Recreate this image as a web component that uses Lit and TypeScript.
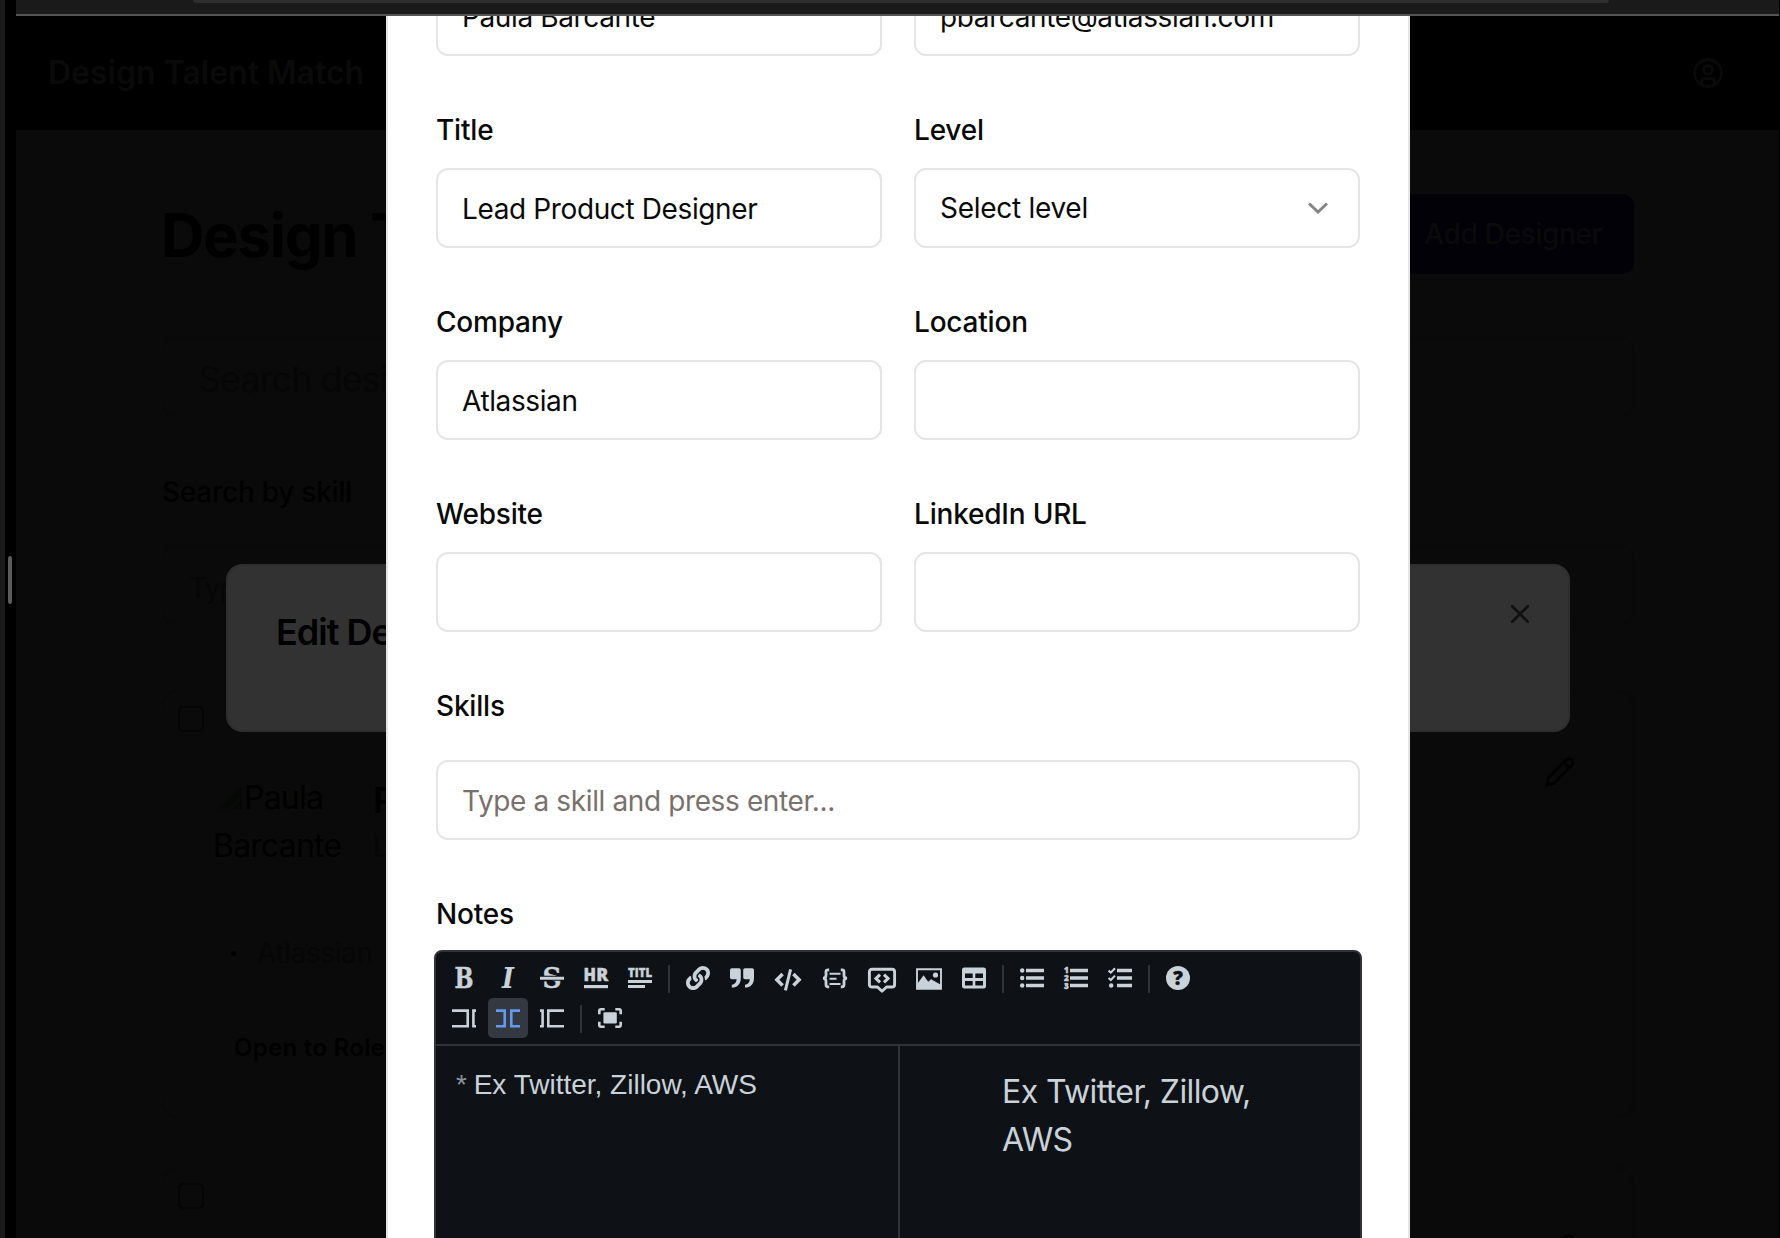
import { LitElement, html, css, svg } from "lit";
import { customElement } from "lit/decorators.js";

/* Toolbar glyphs, drawn on a grid 24 units high. */
const glyphs: Record<string, { w: number; art: unknown }> = {
  bold: { w: 24, art: svg`<text class="slab" x="12" y="22" font-size="28" text-anchor="middle" textLength="19" lengthAdjust="spacingAndGlyphs">B</text>` },
  italic: { w: 24, art: svg`<text class="slab it" x="12" y="22" font-size="28" text-anchor="middle" textLength="12" lengthAdjust="spacingAndGlyphs">I</text>` },
  strike: { w: 24, art: svg`<text class="slab" x="12" y="22" font-size="28" text-anchor="middle" textLength="19" lengthAdjust="spacingAndGlyphs">S</text><path class="cut" d="M0 12.200h24" stroke-width="5"/><path d="M0 12.200h24" class="l" stroke-width="3"/>` },
  hr: { w: 24, art: svg`<text class="sans" x="-.5" y="15" font-size="18" textLength="12.500" lengthAdjust="spacingAndGlyphs">H</text><text class="sans" x="12.300" y="15" font-size="17.500" textLength="12" lengthAdjust="spacingAndGlyphs">R</text><rect y="19" width="24" height="3.200"/>` },
  title: { w: 24, art: svg`<text class="sans" x="0" y="11.400" font-size="12" textLength="24" lengthAdjust="spacingAndGlyphs">TITL</text><rect y="14" width="24" height="3"/><rect y="19" width="17" height="3"/>` },
  link: { w: 24, art: svg`<path transform="scale(.0469)" d="M326.612 185.391c59.747 59.809 58.927 155.698.36 214.59-.11.12-.24.25-.36.37l-67.2 67.2c-59.27 59.27-155.699 59.262-214.96 0-59.27-59.26-59.27-155.7 0-214.96l37.106-37.106c9.84-9.84 26.786-3.3 27.294 10.606.648 17.722 3.826 35.527 9.69 52.721 1.986 5.822.567 12.262-3.783 16.612l-13.087 13.087c-28.026 28.026-28.905 73.66-1.155 101.96 28.024 28.579 74.086 28.749 102.325.51l67.2-67.19c28.191-28.191 28.073-73.757 0-101.83-3.701-3.694-7.429-6.564-10.341-8.569a16.037 16.037 0 0 1-6.947-12.606c-.396-10.567 3.348-21.456 11.698-29.806l21.054-21.055c5.521-5.521 14.182-6.199 20.584-1.731a152.482 152.482 0 0 1 20.522 17.197zM467.547 44.449c-59.261-59.262-155.69-59.27-214.96 0l-67.2 67.2c-.12.12-.25.25-.36.37-58.566 58.892-59.387 154.781.36 214.59a152.454 152.454 0 0 0 20.521 17.196c6.402 4.468 15.064 3.789 20.584-1.731l21.054-21.055c8.35-8.35 12.094-19.239 11.698-29.806a16.037 16.037 0 0 0-6.947-12.606c-2.912-2.005-6.64-4.875-10.341-8.569-28.073-28.073-28.191-73.639 0-101.83l67.2-67.19c28.239-28.239 74.3-28.069 102.325.51 27.75 28.3 26.872 73.934-1.155 101.96l-13.087 13.087c-4.35 4.35-5.769 10.79-3.783 16.612 5.864 17.194 9.042 34.999 9.69 52.721.509 13.906 17.454 20.446 27.294 10.606l37.106-37.106c59.271-59.259 59.271-155.699.001-214.959z"/>` },
  quote: { w: 24, art: svg`<path d="M1.8 2.200H9q1.800 0 1.800 1.800v8c0 6-3.400 9.600-9 9.600v-2.800c3-.4 4.600-2.400 4.800-5.600H1.800Q0 13.200 0 11.400V4q0-1.800 1.800-1.800zM15 2.200h7.200Q24 2.200 24 4v8c0 6-3.400 9.600-9 9.600v-2.800c3-.4 4.600-2.400 4.800-5.600H15q-1.800 0-1.800-1.800V4q0-1.800 1.800-1.800z"/>` },
  code: { w: 28, art: svg`<path class="l" stroke-width="3.500" d="M8.600 8 2.900 13.800l5.700 5.800M19.400 8l5.700 5.800-5.700 5.800"/><path class="l" stroke-width="3" d="M16.600 3.400l-5.200 21"/>` },
  block: { w: 26, art: svg`<path class="l" stroke-width="2.800" d="M7.200 3.800H6q-2 0-2 2v3.600q0 2.600-3 2.800 3 .3 3 2.900v3.700q0 2 2 2h1.200M18.800 3.800H20q2 0 2 2v3.600q0 2.600 3 2.800-3 .3-3 2.900v3.700q0 2-2 2h-1.200"/><path class="l" stroke-width="1.900" d="M7.500 7.800h11M7.500 12.800h7M7.500 18h11"/>` },
  comment: { w: 28, art: svg`<path class="l" stroke-width="2.900" stroke-linejoin="round" d="M4 3.300h20q2.600 0 2.600 2.600v12.800q0 2.300-2.600 2.300h-5.500L14 25.200 9.500 21H4q-2.600 0-2.600-2.300V5.900q0-2.600 2.600-2.600z"/><path class="l" stroke-width="3.100" d="M12 8.600 8 12.500l4 3.900M16 8.600l4 3.900-4 3.900"/>` },
  image: { w: 26, art: svg`<path class="l" stroke-width="1.900" d="M1 3.300h24v19.500H1z"/><path d="M1.500 22V17.500L7.600 9.200l4.600 6.600 2.800-2.600 10 5.500V22z"/><circle cx="19.500" cy="9" r="2.600"/>` },
  table: { w: 24, art: svg`<path fill-rule="evenodd" d="M2.300 1.500h19.400Q24 1.500 24 3.800v16.400q0 2.300-2.300 2.300H2.300Q0 22.500 0 20.200V3.800q0-2.300 2.300-2.300zM3 7.500V12h7.700V7.500zm10.300 0V12H21V7.500zM3 15v4.600h7.700V15zm10.300 0v4.600H21V15z"/>` },
  ul: { w: 24, art: svg`<circle cx="2.200" cy="4.500" r="2.200"/><circle cx="2.200" cy="12" r="2.200"/><circle cx="2.200" cy="19.500" r="2.200"/><path class="l" stroke-width="3.400" d="M6 4.500h18M6 12h18M6 19.500h18"/>` },
  ol: { w: 24, art: svg`<text class="sans" x="0" y="7.400" font-size="8">1</text><text class="sans" x="0" y="14.900" font-size="8">2</text><text class="sans" x="0" y="22.500" font-size="8">3</text><path class="l" stroke-width="3.400" d="M6 4.500h18M6 12h18M6 19.500h18"/>` },
  check: { w: 24, art: svg`<path class="l" stroke-width="2.100" d="M.6 4.600 2.800 6.600 7 2.200M.6 12l2.200 2L7 9.600"/><circle cx="3.200" cy="19.500" r="2.200"/><path class="l" stroke-width="3.400" d="M9 4.500h15M9 12h15M9 19.500h15"/>` },
  help: { w: 24, art: svg`<circle cx="12" cy="12" r="12"/><text class="sans hole" x="12" y="19" font-size="19" text-anchor="middle">?</text>` },
  edit: { w: 24, art: svg`<path class="l" stroke-width="2.600" d="M0 4.600h15.700v15.600H0M24 4.600h-2.600v15.600H24"/>` },
  live: { w: 24, art: svg`<path class="l" stroke-width="2.600" d="M0 4.600h8.700v15.600H0M24 4.600h-8.700v15.600H24"/>` },
  preview: { w: 24, art: svg`<path class="l" stroke-width="2.600" d="M24 4.600H8.300v15.600H24M0 4.600h2.600v15.600H0"/>` },
  full: { w: 24, art: svg`<path class="l" stroke-width="2.600" d="M1.300 8.300V5q0-1.700 1.700-1.700h3.700M17.300 3.300H21q1.700 0 1.700 1.700v3.300M22.700 15.700V19q0 1.700-1.700 1.700h-3.700M6.700 20.700H3q-1.700 0-1.700-1.700v-3.300"/><rect x="5.400" y="6.300" width="13.400" height="11.200" rx="1.200"/>` },
};

const toolbar = [
  ["bold", "italic", "strike", "hr", "title", "|", "link", "quote", "code", "block", "comment", "image", "table", "|", "ul", "ol", "check", "|", "help"],
  ["edit", "live", "preview", "|", "full"],
];

@customElement("notes-editor")
export class NotesEditor extends LitElement {
  static styles = css`
    :host { display: flex; flex-direction: column; box-sizing: border-box; height: 400px; margin: 0 -2px; border: 2px solid #30343a; border-radius: 8px; background: #0e1116; color: #c9d1d9; overflow: hidden; }
    .bar { padding: 6px 8px; border-bottom: 2px solid #30343a; }
    .row { display: flex; gap: 4px; height: 40px; align-items: center; }
    .btn { display: flex; padding: 8px; border-radius: 5px; }
    .btn.on { background: #343941; color: #629bf0; }
    .sep { width: 2px; height: 28px; margin: 2px 4px 0; background: #30343a; }
    svg { display: block; overflow: visible; fill: currentColor; }
    .l { fill: none; stroke: currentColor; }
    .cut { fill: none; stroke: #0e1116; }
    .slab { font-family: "DejaVu Serif", serif; font-weight: 700; stroke: currentColor; stroke-width: 0.5px; }
    .it { font-style: italic; stroke: none; }
    .sans { font-family: "Open Sans", sans-serif; font-weight: 800; stroke: currentColor; stroke-width: 0.4px; }
    .hole { fill: #0e1116; stroke: #0e1116; }
    .panes { flex: 1; display: grid; grid-template-columns: 464px 1fr; }
    .src { border-right: 2px solid #30343a; padding: 21px 20px; font: 28px/36px "Liberation Sans", sans-serif; }
    .src .mark { color: #8b949e; margin-right: -1px; }
    .out { padding: 22px 90px 0 102px; font: 32px/48px Inter, sans-serif; letter-spacing: -0.6px; }
  `;
  render() {
    return html`
      <div class="bar">
        ${toolbar.map((r) => html`<div class="row">${r.map((n) => n === "|"
          ? html`<span class="sep"></span>`
          : html`<span class="btn ${n === "live" ? "on" : ""}"><svg width=${glyphs[n].w} height="24" viewBox="0 0 ${glyphs[n].w} 24">${glyphs[n].art}</svg></span>`)}</div>`)}
      </div>
      <div class="panes">
        <div class="src"><span class="mark">*</span> Ex Twitter, Zillow, AWS</div>
        <div class="out">Ex Twitter, Zillow, AWS</div>
      </div>`;
  }
}

@customElement("designer-form")
export class DesignerForm extends LitElement {
  static styles = css`
    :host { display: block; box-sizing: border-box; padding: 0 48px; border: solid #e5e5e5; border-width: 0 2px; background: #fff; color: #0a0a0a; font: 28px/28px Inter, sans-serif; overflow: hidden; }
    .grid { display: grid; grid-template-columns: 1fr 1fr; column-gap: 32px; row-gap: 60px; margin-top: -92px; }
    .field { display: flex; flex-direction: column; gap: 24px; }
    .label { font-weight: 500; letter-spacing: -0.2px; }
    .box { display: flex; align-items: center; justify-content: space-between; box-sizing: border-box; height: 80px; padding: 2px 24px 0; border: 2px solid #e5e5e5; border-radius: 12px; letter-spacing: -0.38px; }
    .box.select { padding: 0 24px; letter-spacing: -0.28px; }
    .hint { color: #78716c; }
    .wide { margin-top: 60px; }
    .skills { gap: 40px; }
    .notes { gap: 22px; }
    svg { display: block; fill: none; stroke: #858585; stroke-width: 3; margin-right: 5px; }
  `;
  private fields = [
    ["Name", "Paula Barcante"], ["Email", "pbarcante@atlassian.com"],
    ["Title", "Lead Product Designer"], ["Level", "Select level"],
    ["Company", "Atlassian"], ["Location", ""],
    ["Website", ""], ["LinkedIn URL", ""],
  ];
  render() {
    return html`
      <div class="grid">
        ${this.fields.map(([label, value]) => html`
          <div class="field">
            <div class="label">${label}</div>
            ${label === "Level"
              ? html`<div class="box select">${value}<svg width="22" height="12" viewBox="0 0 22 12"><path d="M2 1.500 11 10 20 1.500"/></svg></div>`
              : html`<div class="box">${value}</div>`}
          </div>`)}
      </div>
      <div class="field skills wide">
        <div class="label">Skills</div>
        <div class="box hint">Type a skill and press enter...</div>
      </div>
      <div class="field notes wide">
        <div class="label">Notes</div>
        <notes-editor></notes-editor>
      </div>`;
  }
}

const pencil = html`<svg class="pencil" width="30" height="30" viewBox="0 0 32 32"><path d="m2 30 1.500-8L22.500 3a4 4 0 0 1 6 6L9.500 28zM20 5.500l6 6"/></svg>`;

@customElement("designer-page")
export class DesignerPage extends LitElement {
  static styles = css`
    :host { display: block; background: #0a0a0a; color: #000; font-family: Inter, sans-serif; overflow: hidden; }
    svg { display: block; fill: none; }
    .head { display: flex; align-items: center; justify-content: space-between; box-sizing: border-box; height: 114px; padding: 0 56px 0 32px; background: #000; color: #0a0a0a; font-size: 32px; font-weight: 600; line-height: 48px; }
    .user { stroke: #0a0a0a; stroke-width: 2.8; margin-top: -1px; }
    .main { padding: 64px 145px 0 146px; }
    .top { display: flex; align-items: center; justify-content: space-between; height: 80px; }
    .h1 { font-size: 60px; font-weight: 700; line-height: 72px; letter-spacing: -1.3px; margin: 2px 0 0 -1px; }
    .add { display: flex; align-items: center; height: 80px; padding: 0 32px; border-radius: 12px; background: #010107; color: #0a0a0a; font-size: 28px; font-weight: 500; letter-spacing: -0.35px; }
    .input { display: flex; align-items: center; box-sizing: border-box; height: 80px; border: 2px solid #090909; border-radius: 12px; color: #060606; }
    .search { margin-top: 63px; padding: 4px 0 0 34px; font-size: 36px; letter-spacing: -1px; }
    .label { margin: 57px 0 35px; font-size: 28px; font-weight: 500; line-height: 36px; letter-spacing: -0.25px; }
    .skill { padding: 6px 0 0 25px; font-size: 28px; letter-spacing: -0.6px; }
    .card { display: flex; box-sizing: border-box; height: 428px; margin-top: 65px; padding: 14px; border: 2px solid #090909; border-radius: 16px; }
    .card + .card { margin-top: 49px; }
    .tick { box-sizing: border-box; flex: none; width: 26px; height: 26px; border: 2px solid #050505; border-radius: 5px; }
    .body { flex: 1; padding-top: 68px; }
    .who { display: flex; height: 112px; }
    .face { display: flex; flex-wrap: wrap; align-content: flex-start; width: 128px; margin-left: 9px; font-size: 32px; line-height: 48px; letter-spacing: -0.8px; }
    .face svg { margin: 11px 0 0 6px; }
    .name { margin-left: 32px; font-size: 36px; font-weight: 600; line-height: 53px; }
    .role { color: #060606; font-size: 28px; font-weight: 400; line-height: 40px; }
    .facts { margin: 39px 0 0 27px; display: flex; align-items: center; gap: 21px; font-size: 28px; line-height: 56px; letter-spacing: -0.38px; color: #060606; }
    .dot { width: 5px; height: 5px; border-radius: 50%; background: #000; }
    .open { margin: 49px 0 0 30px; font-size: 24px; font-weight: 600; line-height: 36px; letter-spacing: 0.3px; }
    .pencil { stroke: #000; stroke-width: 3.2; margin: 51px 43px 0 0; flex: none; }
  `;
  private card(filled: boolean) {
    return html`<div class="card">
      <div class="tick"></div>
      <div class="body">${filled ? html`
        <div class="who">
          <div class="face"><svg width="25" height="24" viewBox="0 0 25 24"><path fill="#050805" d="M0 24 23 2v22z"/><path fill="#0a0a0a" d="m8 24 14-13v4L13 24z"/></svg><span>Paula</span><span>Barcante</span></div>
          <div class="name">Paula Barcante<div class="role">Lead Product Designer</div></div>
        </div>
        <div class="facts"><span class="dot"></span>Atlassian</div>
        <div class="open">Open to Roles</div>` : ""}
      </div>
      ${pencil}
    </div>`;
  }
  render() {
    return html`
      <div class="head"><span>Design Talent Match</span>
        <svg class="user" width="30" height="30" viewBox="0 0 30 30"><circle cx="15" cy="15" r="13.500"/><circle cx="15" cy="12" r="4.300"/><path d="M8 26v-2.500q0-3 3-3h8q3 0 3 3V26"/></svg>
      </div>
      <div class="main">
        <div class="top"><div class="h1">Design Talent</div><div class="add">Add Designer</div></div>
        <div class="input search">Search designers</div>
        <div class="label">Search by skill</div>
        <div class="input skill">Type a skill and press enter...</div>
        ${this.card(true)}${this.card(false)}
      </div>`;
  }
}

@customElement("app-root")
export class AppRoot extends LitElement {
  static styles = css`
    :host { display: grid; grid-template-columns: 5px 11px 1763px 1px; position: relative; width: 1780px; height: 1238px; overflow: hidden; background: #000; }
    .edge { background: #1a1a1a; }
    .grip { display: flex; align-items: center; justify-content: center; padding: 0 1px 78px 0; box-sizing: border-box; }
    .grip i { width: 4px; height: 48px; border-radius: 2px; background: #5b5b5b; }
    .window { display: flex; flex-direction: column; height: 1238px; min-width: 0; }
    .chrome { box-sizing: border-box; flex: none; height: 16px; padding: 0 170px 0 177px; background: #1a1a1a; border-bottom: 2px solid #555; }
    .url { height: 3px; border-radius: 0 0 8px 8px; background: #2e2e2e; }
    designer-page { flex: 1; min-height: 0; }
    .panel { position: absolute; left: 226px; top: 564px; box-sizing: border-box; width: 1344px; height: 168px; display: flex; justify-content: space-between; padding: 38px 39px 0 48px; border: 2px solid #2e2e2e; border-radius: 16px; background: #323232; color: #000; font: 600 36px/56px Inter, sans-serif; letter-spacing: -1px; }
    .panel svg { margin-top: 1px; fill: none; stroke: #101010; stroke-width: 2.6; stroke-linecap: round; }
    .form { position: absolute; left: 386px; top: 16px; width: 1024px; height: 1222px; }
  `;
  render() {
    return html`
      <div class="edge"></div>
      <div class="grip"><i></i></div>
      <div class="window">
        <div class="chrome"><div class="url"></div></div>
        <designer-page></designer-page>
      </div>
      <div class="panel">Edit Designer<svg width="18" height="18" viewBox="0 0 18 18"><path d="m1 1 16 16M17 1 1 17"/></svg></div>
      <designer-form class="form"></designer-form>`;
  }
}
